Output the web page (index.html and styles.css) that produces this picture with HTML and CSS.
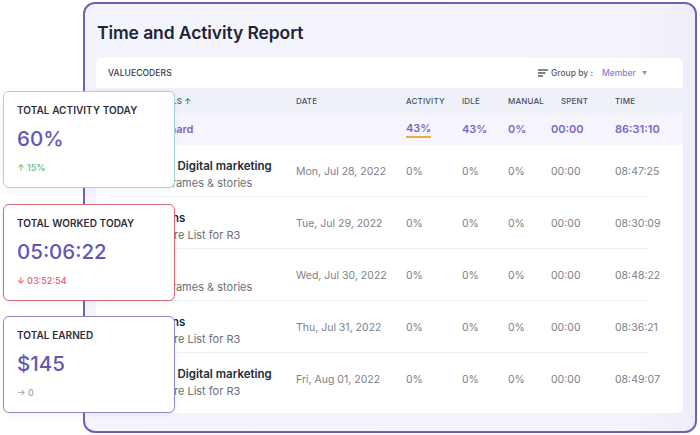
FILE: index.html
```html
<!DOCTYPE html>
<html lang="en">
<head>
<meta charset="utf-8">
<title>Time and Activity Report</title>
<link rel="stylesheet" href="styles.css">
</head>
<body>
<div class="stage">
  <section class="panel">
    <h1 class="title">Time and Activity Report</h1>
    <div class="card">
      <div class="toolbar">
        <span class="org">VALUECODERS</span>
        <span class="groupby">
          <svg class="gb-icon" width="10" height="8" viewBox="0 0 10 8"><path d="M0 1h10M0 4h7.5M0 7h5" stroke="#555b66" stroke-width="1.3" fill="none"/></svg>
          <span class="gb-label">Group by :</span>
          <span class="gb-value">Member</span>
          <span class="gb-caret">▼</span>
        </span>
      </div>
      <div class="row head">
        <span>PROJECT DETAILS ↑</span>
        <span>DATE</span>
        <span>ACTIVITY</span>
        <span>IDLE</span>
        <span>MANUAL</span>
        <span class="spent-h">SPENT</span>
        <span>TIME</span>
      </div>
      <div class="row summary">
        <span>Joseph Leonard</span>
        <span></span>
        <span><span class="underline">43%</span></span>
        <span>43%</span>
        <span>0%</span>
        <span>00:00</span>
        <span>86:31:10</span>
      </div>
      <div class="row data">
        <div class="detail"><span class="d-title">Social Ads - Digital marketing</span><span class="d-sub">Create wireframes &amp; stories</span></div>
        <span>Mon, Jul 28, 2022</span><span>0%</span><span>0%</span><span>0%</span><span>00:00</span><span>08:47:25</span>
      </div>
      <div class="row data">
        <div class="detail"><span class="d-title">UI Animations</span><span class="d-sub">Define Feature List for R3</span></div>
        <span>Tue, Jul 29, 2022</span><span>0%</span><span>0%</span><span>0%</span><span>00:00</span><span>08:30:09</span>
      </div>
      <div class="row data">
        <div class="detail"><span class="d-title">Wireframe</span><span class="d-sub">Create wireframes &amp; stories</span></div>
        <span>Wed, Jul 30, 2022</span><span>0%</span><span>0%</span><span>0%</span><span>00:00</span><span>08:48:22</span>
      </div>
      <div class="row data">
        <div class="detail"><span class="d-title">UI Animations</span><span class="d-sub">Define Feature List for R3</span></div>
        <span>Thu, Jul 31, 2022</span><span>0%</span><span>0%</span><span>0%</span><span>00:00</span><span>08:36:21</span>
      </div>
      <div class="row data last">
        <div class="detail"><span class="d-title">Social Ads - Digital marketing</span><span class="d-sub">Define Feature List for R3</span></div>
        <span>Fri, Aug 01, 2022</span><span>0%</span><span>0%</span><span>0%</span><span>00:00</span><span>08:49:07</span>
      </div>
    </div>
  </section>

  <div class="stats">
    <div class="stat teal">
      <span class="s-label">TOTAL ACTIVITY TODAY</span>
      <span class="s-value">60%</span>
      <span class="s-sub up">↑ 15%</span>
    </div>
    <div class="stat red">
      <span class="s-label">TOTAL WORKED TODAY</span>
      <span class="s-value">05:06:22</span>
      <span class="s-sub down">↓ 03:52:54</span>
    </div>
    <div class="stat violet">
      <span class="s-label">TOTAL EARNED</span>
      <span class="s-value">$145</span>
      <span class="s-sub flat">→ 0</span>
    </div>
  </div>
</div>
</body>
</html>
```

FILE: styles.css
```css
* { box-sizing: border-box; }

html, body {
  margin: 0;
  padding: 0;
  background: #ffffff;
}

body {
  width: 700px;
  height: 435px;
  overflow: hidden;
  font-family: Inter, "Noto Sans", "Liberation Sans", sans-serif;
  color: #2a2e3b;
}

.stage {
  position: relative;
  width: 700px;
  height: 435px;
  padding: 2px 3px 2px 83px;
}

.panel {
  height: 431px;
  border: 2px solid #6f60b8;
  border-radius: 12px;
  background: linear-gradient(90deg, #f4f5fc 0%, #f2f3fb 90%, #eeeefa 100%);
  padding: 18px 12px 0 11px;
}

.title {
  margin: 0 0 14px 1px;
  font-size: 17.5px;
  line-height: 22px;
  font-weight: 600;
  color: #1f2536;
  letter-spacing: -0.1px;
}

.card {
  background: #ffffff;
  border-radius: 6px;
  height: 355px;
  overflow: hidden;
}

.toolbar {
  height: 30px;
  display: flex;
  align-items: center;
  justify-content: space-between;
  padding: 0 36px 0 12px;
}

.org {
  font-size: 8.5px;
  font-weight: 500;
  color: #353a45;
  letter-spacing: 0.1px;
}

.groupby {
  display: flex;
  align-items: center;
  font-size: 8.5px;
  font-weight: 500;
}

.gb-icon { margin-right: 3px; }

.gb-label { color: #5a5f6a; }

.gb-value {
  color: #8a7fd3;
  margin-left: 9px;
}

.gb-caret {
  color: #9196a0;
  font-size: 5px;
  margin-left: 6px;
}

.row {
  display: grid;
  grid-template-columns: 188px 110px 56px 46px 43px 64px 1fr;
  align-items: center;
  padding-left: 12px;
}

.row > span { white-space: nowrap; }

.head {
  height: 25px;
  background: #eef1f8;
  font-size: 8px;
  font-weight: 500;
  color: #4b5160;
  letter-spacing: 0.15px;
}

.spent-h { padding-left: 10px; }

.summary {
  height: 32px;
  background: #f6f5fd;
  font-size: 11px;
  font-weight: 600;
  color: #7a68c8;
}

.underline {
  display: inline-block;
  line-height: 13px;
  padding-bottom: 1px;
  border-bottom: 2px solid #f2a93b;
}

.data {
  height: 52px;
  font-size: 10.5px;
  color: #7d8088;
  background: linear-gradient(#eff0f3, #eff0f3) 12px 100% / calc(100% - 47px) 1px no-repeat;
}

.data.last { background: none; }

.detail {
  display: flex;
  flex-direction: column;
  gap: 1px;
  padding-top: 6px;
  white-space: nowrap;
}

.d-title {
  font-size: 11.5px;
  line-height: 16px;
  font-weight: 600;
  color: #232a3a;
}

.d-sub {
  font-size: 11px;
  line-height: 16px;
  color: #6b6f78;
}

.stats {
  position: absolute;
  left: 3px;
  top: 91px;
  display: flex;
  flex-direction: column;
  gap: 15.5px;
}

.stat {
  width: 172px;
  height: 97px;
  background: #ffffff;
  border: 1.5px solid #a9d5dc;
  border-radius: 6px;
  padding: 11px 13px;
  display: flex;
  flex-direction: column;
  box-shadow: 0 2px 6px rgba(40, 40, 80, 0.06);
}

.stat.teal { border-color: #a7d4dc; }
.stat.red { border-color: #d6667a; }
.stat.violet { border-color: #8f88cc; }

.s-label {
  font-size: 10px;
  line-height: 14px;
  font-weight: 600;
  color: #2b2f3b;
  letter-spacing: 0.05px;
}

.s-value {
  margin-top: 9px;
  font-size: 20.5px;
  line-height: 26px;
  font-weight: 500;
  color: #6656b3;
}

.s-sub {
  margin-top: 10px;
  font-size: 9px;
  line-height: 12px;
  font-weight: 500;
}

.s-sub.up { color: #5dbb8c; }
.s-sub.down { color: #df5a6e; }
.s-sub.flat { color: #a0a5ad; }
```
